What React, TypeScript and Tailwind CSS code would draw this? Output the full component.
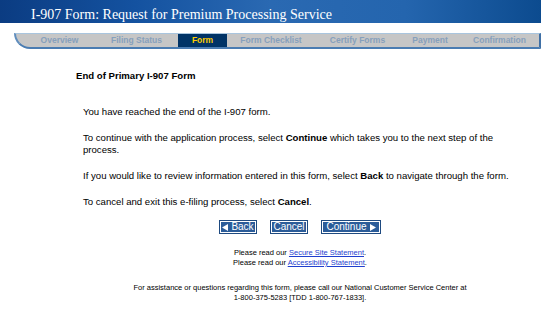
import React from "react";

const tabs: { label: string; w: string; active?: boolean }[] = [
  { label: "Overview", w: "w-[87px]" },
  { label: "Filing Status", w: "w-[67px]" },
  { label: "", w: "w-[8px]" },
  { label: "Form", w: "w-[49px]", active: true },
  { label: "Form Checklist", w: "w-[88px]" },
  { label: "Certify Forms", w: "w-[85px]" },
  { label: "Payment", w: "w-[60px]" },
  { label: "Confirmation", w: "flex-1" },
];

function TriLeft() {
  return (
    <svg width="6" height="7" viewBox="0 0 6 7" className="block">
      <polygon points="6,0 6,7 0,3.5" fill="#ffffff" />
    </svg>
  );
}
function TriRight() {
  return (
    <svg width="6" height="7" viewBox="0 0 6 7" className="block">
      <polygon points="0,0 0,7 6,3.5" fill="#ffffff" />
    </svg>
  );
}

const btn =
  "h-[14px] flex items-center justify-center gap-[3px] bg-[#2b5c99] text-white text-[10px] leading-[14px] shadow-[inset_0_0_0_1px_#1e4a80,inset_0_0_0_2px_#ffffff]";

export default function App() {
  return (
    <div className="w-[544px] h-[315px] bg-white overflow-hidden text-black font-['Liberation_Sans',Arial,sans-serif]">
      <div className="w-[541px] h-[23px] pl-[31px] pt-[5px] bg-[linear-gradient(90deg,#0b3c82_0%,#1452a0_25%,#2a69b2_50%,#2465ae_75%,#0c4b8f_100%)]">
        <span className="block text-white text-[14px] leading-[20px] font-['Liberation_Serif','Times_New_Roman',serif] whitespace-nowrap">
          I-907 Form: Request for Premium Processing Service
        </span>
      </div>

      <div className="mt-[10px] ml-[14px] w-[527px] h-[16px] flex bg-[#c6c6c6] border-t border-t-[#a9c5de] border-l-2 border-r-2 border-b-2 border-l-[#5f8dbd] border-r-[#3f70a6] border-b-[#4a7cb2] rounded-bl-[16px]">
        {tabs.map((t, i) => (
          <div
            key={i}
            className={`${t.w} h-full flex items-center justify-center text-[8.5px] font-bold leading-[13px] whitespace-nowrap ${
              t.active ? "bg-[#003366] text-[#ffcc00]" : "text-[#86a0bc]"
            }`}
          >
            {t.label}
          </div>
        ))}
      </div>

      <div className="ml-[76px] w-[448px] mt-[21px]">
        <div className="text-[9.6px] leading-[12px] font-bold">End of Primary I-907 Form</div>
        <div className="pl-[7px] mt-[24px] text-[9.6px] leading-[12px] flex flex-col gap-[14px]">
          <p>You have reached the end of the I-907 form.</p>
          <p>
            <span>To continue with the application process, select </span>
            <b>Continue</b>
            <span> which takes you to the next step of the</span>
            <br />
            <span>process.</span>
          </p>
          <p>
            If you would like to review information entered in this form, select <b>Back</b> to navigate through the
            form.
          </p>
          <p>
            To cancel and exit this e-filing process, select <b>Cancel</b>.
          </p>
        </div>

        <div className="mt-[12px] flex justify-center gap-[13px]">
          <div className={`${btn} w-[38px]`}>
            <TriLeft />
            <span>Back</span>
          </div>
          <div className={`${btn} w-[38px]`}>
            <span>Cancel</span>
          </div>
          <div className={`${btn} w-[60px]`}>
            <span>Continue</span>
            <TriRight />
          </div>
        </div>

        <div className="mt-[14px] text-center text-[7.5px] leading-[10px]">
          <div>
            Please read our <span className="text-[#1f3fcf] underline">Secure Site Statement</span>.
          </div>
          <div>
            Please read our <span className="text-[#1f3fcf] underline">Accessibility Statement</span>.
          </div>
        </div>

        <div className="mt-[15px] text-center text-[7.5px] leading-[10px] whitespace-nowrap">
          <div>For assistance or questions regarding this form, please call our National Customer Service Center at</div>
          <div>1-800-375-5283 [TDD 1-800-767-1833].</div>
        </div>
      </div>
    </div>
  );
}
